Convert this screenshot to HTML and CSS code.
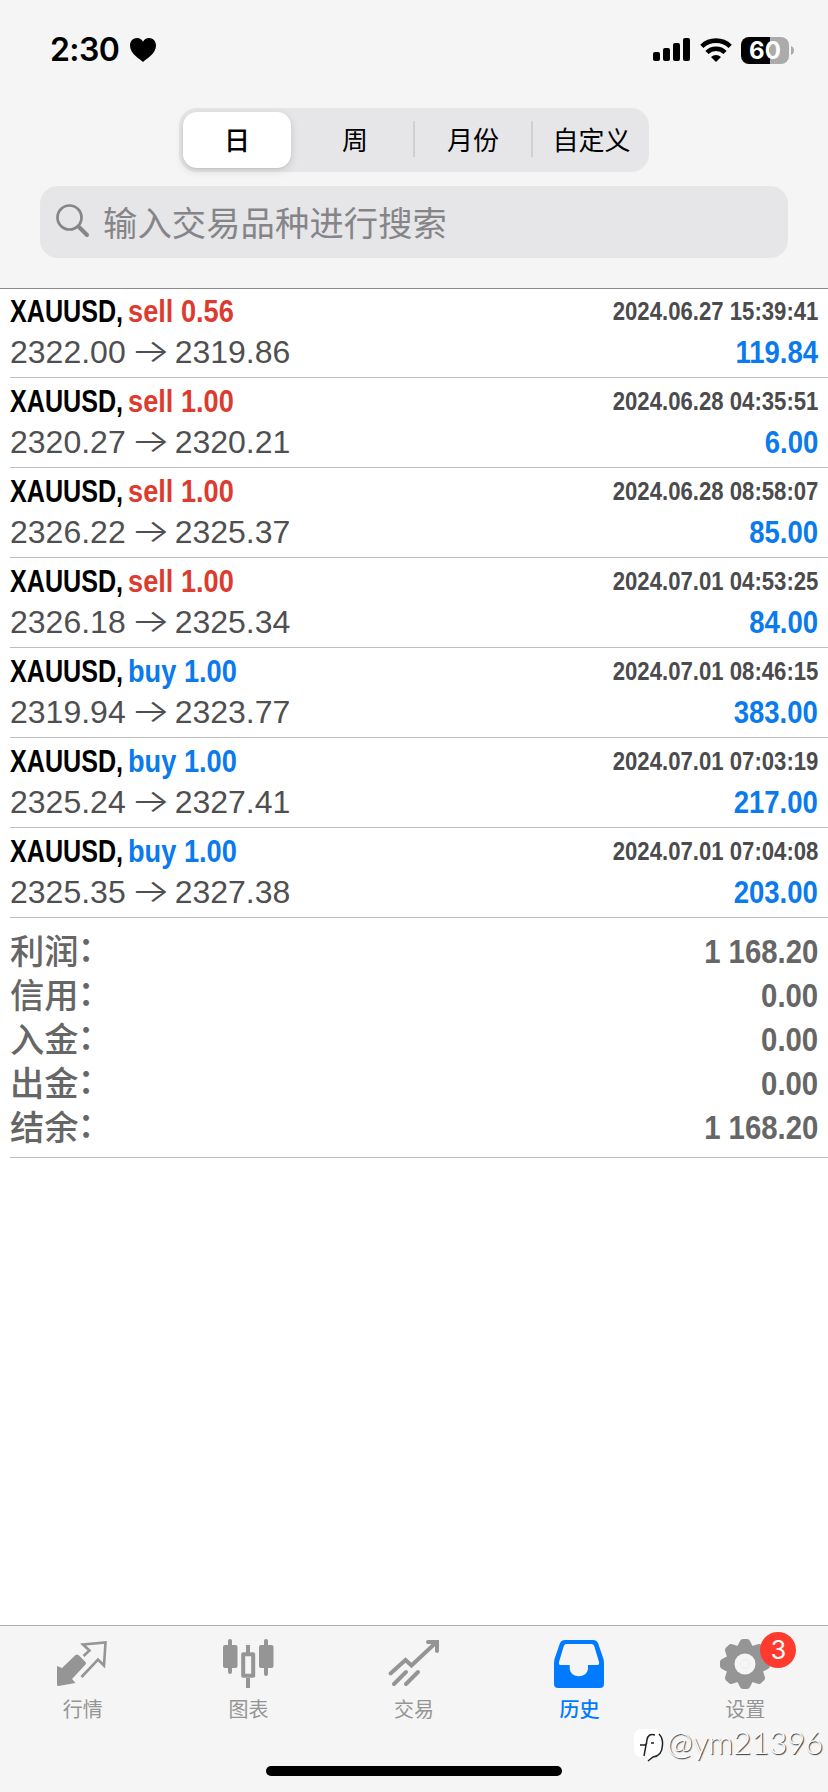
FILE: index.html
```html
<!DOCTYPE html>
<html lang="zh-CN">
<head>
<meta charset="utf-8">
<title>历史</title>
<link rel="stylesheet" href="styles.css">
</head>
<body>
<div class="app">
  <header class="header">
    <div class="status">
      <div class="clock"><span>2:30</span>
        <svg width="26" height="24" viewBox="0 0 26 24"><path d="M13 24C10 21 0 16 0 7.500C0 3 3 0 7 0C9.700 0 12 1.500 13 3.800C14 1.500 16.300 0 19 0C23 0 26 3 26 7.500C26 16 16 21 13 24Z"/></svg>
      </div>
      <div class="signals">
        <svg width="37" height="24" viewBox="0 0 37 24"><rect x="0" y="14" width="7" height="9" rx="2"/><rect x="10" y="10" width="7" height="13" rx="2"/><rect x="20" y="5" width="7" height="18" rx="2"/><rect x="30" y="0" width="7" height="23" rx="2"/></svg>
        <svg class="wifi" width="32" height="24" viewBox="0 0 32 24"><g fill="none" stroke="#000" stroke-width="4.600"><path d="M1.800 8.300A20.500 20.500 0 0 1 30.200 8.300"/><path d="M7 14.500A12.700 12.700 0 0 1 25 14.500"/></g><path d="M11 18.900A7.300 7.300 0 0 1 21 18.900L16 24Z"/></svg>
        <div class="battery"><span>60</span></div>
        <svg class="nub" width="3" height="9" viewBox="0 0 3 9"><path d="M0 0C4 1.500 4 7.500 0 9Z" fill="#ababab"/></svg>
      </div>
    </div>
    <nav class="segments">
      <span class="segment active">日</span><span class="segment second">周</span><span class="segment ruled">月份</span><span class="segment ruled last">自定义</span>
    </nav>
    <div class="search">
      <svg width="34" height="34" viewBox="0 0 34 34" fill="none" stroke="#858589"><circle cx="13.500" cy="13.500" r="12" stroke-width="2.700"/><path d="M22.500 22.500L31 31" stroke-width="4" stroke-linecap="round"/></svg>
      <span>输入交易品种进行搜索</span>
    </div>
  </header>
  <main class="history">
    <article class="deal">
      <div class="line"><div class="title"><span class="symbol">XAUUSD,</span><span class="side sell">sell 0.56</span></div><time class="time">2024.06.27 15:39:41</time></div>
      <div class="line"><div class="prices">2322.00<i>→</i>2319.86</div><div class="profit">119.84</div></div>
    </article>
    <article class="deal">
      <div class="line"><div class="title"><span class="symbol">XAUUSD,</span><span class="side sell">sell 1.00</span></div><time class="time">2024.06.28 04:35:51</time></div>
      <div class="line"><div class="prices">2320.27<i>→</i>2320.21</div><div class="profit">6.00</div></div>
    </article>
    <article class="deal">
      <div class="line"><div class="title"><span class="symbol">XAUUSD,</span><span class="side sell">sell 1.00</span></div><time class="time">2024.06.28 08:58:07</time></div>
      <div class="line"><div class="prices">2326.22<i>→</i>2325.37</div><div class="profit">85.00</div></div>
    </article>
    <article class="deal">
      <div class="line"><div class="title"><span class="symbol">XAUUSD,</span><span class="side sell">sell 1.00</span></div><time class="time">2024.07.01 04:53:25</time></div>
      <div class="line"><div class="prices">2326.18<i>→</i>2325.34</div><div class="profit">84.00</div></div>
    </article>
    <article class="deal">
      <div class="line"><div class="title"><span class="symbol">XAUUSD,</span><span class="side buy">buy 1.00</span></div><time class="time">2024.07.01 08:46:15</time></div>
      <div class="line"><div class="prices">2319.94<i>→</i>2323.77</div><div class="profit">383.00</div></div>
    </article>
    <article class="deal">
      <div class="line"><div class="title"><span class="symbol">XAUUSD,</span><span class="side buy">buy 1.00</span></div><time class="time">2024.07.01 07:03:19</time></div>
      <div class="line"><div class="prices">2325.24<i>→</i>2327.41</div><div class="profit">217.00</div></div>
    </article>
    <article class="deal">
      <div class="line"><div class="title"><span class="symbol">XAUUSD,</span><span class="side buy">buy 1.00</span></div><time class="time">2024.07.01 07:04:08</time></div>
      <div class="line"><div class="prices">2325.35<i>→</i>2327.38</div><div class="profit">203.00</div></div>
    </article>
    <section class="summary">
      <div class="total"><span class="label">利润<b>：</b></span><span class="amount">1 168.20</span></div>
      <div class="total"><span class="label">信用<b>：</b></span><span class="amount">0.00</span></div>
      <div class="total"><span class="label">入金<b>：</b></span><span class="amount">0.00</span></div>
      <div class="total"><span class="label">出金<b>：</b></span><span class="amount">0.00</span></div>
      <div class="total"><span class="label">结余<b>：</b></span><span class="amount">1 168.20</span></div>
    </section>
  </main>
  <footer class="tabbar">
    <div class="tabs">
      <div class="tab">
        <svg width="54" height="54" viewBox="1 0 54 54"><path fill="#959595" d="M2 30L7 32L20.500 19Q22 18 23.500 19L30.500 26Q31.500 27.500 30.500 28.500L17 43L20.500 47L3.500 50Q2 50 2 48.500Z"/><path fill="none" stroke="#959595" stroke-width="2.600" d="M28.500 20L34.500 14.500L28 8.500L50.500 6.500L49 29.500L43 23.500L26.500 41"/></svg>
        <span>行情</span>
      </div>
      <div class="tab">
        <svg width="54" height="54" viewBox="0 0 54 54"><g fill="#959595"><rect x="2" y="9" width="14.500" height="23" rx="2"/><rect x="7" y="3" width="4" height="35" rx="2"/><rect x="38" y="9" width="14.500" height="23" rx="2"/><rect x="43" y="3" width="4" height="37" rx="2"/><rect x="25" y="9" width="4" height="9"/><rect x="25" y="42" width="4" height="10"/></g><rect x="22.200" y="18.200" width="10" height="21.500" fill="none" stroke="#959595" stroke-width="4" stroke-linejoin="round"/></svg>
        <span>图表</span>
      </div>
      <div class="tab">
        <svg width="54" height="54" viewBox="0 0 54 54" fill="none" stroke="#959595" stroke-width="4" stroke-linecap="round" stroke-linejoin="miter"><path d="M3.500 37.500L18.500 24L24.500 29.500L49 6.500M41 6H50V15M7 48L19 36M19 48L31 36"/></svg>
        <span>交易</span>
      </div>
      <div class="tab current">
        <svg width="54" height="54" viewBox="1 0 54 54"><path fill="#007aff" fill-rule="evenodd" d="M13 4H41Q44.500 4 46 7L51.500 23Q52 25 52 28V48Q52 52 48 52H6Q2 52 2 48V28Q2 25 2.500 23L8 7Q9.500 4 13 4ZM14.500 8Q12.500 8 11.800 10L7 26Q6.500 29 8.500 29H17.700V32C17.700 43 36 43 36 32V29H45.500Q47.500 29 47 26L42.200 10Q41.500 8 39.500 8Z"/></svg>
        <span>历史</span>
      </div>
      <div class="tab">
        <svg width="54" height="54" viewBox="-27 -28 54 54"><g fill="#959595"><circle r="19.500"/><g id="teeth"><path id="tooth" d="M-8 -17L-5 -23Q-4 -25 -2 -25H2Q4 -25 5 -23L8 -17Z"/><use href="#tooth" transform="rotate(45)"/><use href="#tooth" transform="rotate(90)"/><use href="#tooth" transform="rotate(135)"/></g><use href="#teeth" transform="rotate(180)"/></g><circle r="10.500" fill="#f5f5f5"/><circle r="4.500" fill="none" stroke="#ececec"/></svg>
        <span>设置</span>
        <em class="badge">3</em>
      </div>
    </div>
    <div class="home"></div>
    <div class="watermark">
      <svg width="30" height="34" viewBox="0 0 30 34"><path fill="#fff" d="M8 0H20Q28 0 28 8V20Q28 26 20 28L14 31V28H8Q0 28 0 20V8Q0 0 8 0Z"/><path fill="none" stroke="#222" stroke-width="1.500" d="M21 6Q14 4 13 11L10 27M6 16H11L13 14M17 14H20M25 5Q29 9 28.500 16Q28 27 19 28L14 32"/></svg>
      <span>@ym21396</span>
    </div>
  </footer>
</div>
</body>
</html>
```
FILE: styles.css
```css
* { box-sizing: border-box; }
body { margin: 0; background: #fff; font-family: "Liberation Sans", "Noto Sans CJK SC", sans-serif; }
.app { width: 828px; height: 1792px; display: flex; flex-direction: column; overflow: hidden; }
.header { height: 289px; flex: none; background: #f5f5f5; border-bottom: 1px solid #8a8a8c; display: flex; flex-direction: column; align-items: center; }
.status { width: 100%; height: 108px; padding: 36px 34px 0 50px; display: flex; justify-content: space-between; align-items: flex-start; }
.clock { display: flex; align-items: center; gap: 11px; font: 600 32px/28px Inter, sans-serif; letter-spacing: -.600px; }
.signals { display: flex; align-items: center; height: 28px; }
.wifi { margin: 0 9px 0 10px; }
.battery { width: 48px; height: 27px; border-radius: 8px; background: linear-gradient(90deg, #000 60%, #ababab 60%); color: #fff; font: 700 24px/27px Inter, sans-serif; text-align: center; }
.nub { margin-left: 2px; }
.segments { width: 470px; height: 64px; padding: 4px; border-radius: 18px; background: #e6e6e8; display: grid; grid-template-columns: 108px 122px 118px 1fr; }
.segment { font: 400 26px/54px "Noto Sans CJK SC", sans-serif; text-align: center; }
.segment.active { background: #fff; border-radius: 14px; font-weight: 500; box-shadow: 0 3px 10px rgba(0,0,0,.12), 0 1px 2px rgba(0,0,0,.08); }
.segment.second { padding-left: 6px; }
.segment.ruled { border-left: 2px solid #d0d0d3; border-image: linear-gradient(transparent 18%, #d0d0d3 18%, #d0d0d3 80%, transparent 80%) 1; }
.segment.last { padding-left: 5px; }
.search { margin-top: 14px; width: 748px; height: 72px; border-radius: 18px; background: #e6e6e8; display: flex; align-items: center; gap: 13px; padding: 0 0 2px 16px; color: #858589; font: 400 34.300px/70px "Noto Sans CJK SC", sans-serif; letter-spacing: .100px; }
.history { flex: 1; }
.deal { height: 90px; margin-left: 10px; padding: 3px 10px 0 0; border-bottom: 1px solid #bebec2; }
.deal:first-child { height: 89px; padding-top: 2px; }
.line { display: flex; justify-content: space-between; height: 41px; line-height: 41px; }
.title { display: flex; font-weight: 700; font-size: 32px; color: #000; white-space: nowrap; }
.symbol { width: 118px; transform: scaleX(.785); transform-origin: left; }
.symbol, .side { flex: none; display: block; }
.symbol { width: max-content; margin-right: -26px; }
.side { transform: scaleX(.85); transform-origin: left; }
.sell { color: #dc3c2f; }
.buy { color: #0a7aec; }
.time { color: #4b4b4d; font-weight: 700; font-size: 26px; transform: scaleX(.852); transform-origin: right; }
.prices { color: #4f4f51; font-size: 32px; display: flex; }
.prices i { font: 300 32px/37px Inter, sans-serif; width: 49px; text-align: center; transform: scaleX(1.3); }
.profit { color: #0a7aec; font-weight: 700; font-size: 32px; transform: scaleX(.86); transform-origin: right; }
.summary { height: 240px; margin-left: 10px; padding: 11px 10px 0 0; border-bottom: 1px solid #bebec2; }
.total { display: flex; justify-content: space-between; height: 44px; color: #666; }
.label { display: flex; font: 500 34.300px/46px "Liberation Sans", "Noto Sans CJK SC", sans-serif; }
.label b { font-weight: 500; transform: translate(-1px, -3px); }
.amount { font: 700 34px/44px "Liberation Sans", sans-serif; transform: scaleX(.863); transform-origin: right; }
.tabbar { position: relative; height: 167px; flex: none; background: #f5f5f5; border-top: 1px solid #acacae; display: flex; flex-direction: column; align-items: center; justify-content: space-between; padding-bottom: 16px; }
.tabs { width: 100%; display: grid; grid-template-columns: repeat(5, 1fr); padding-top: 10px; }
.tab { position: relative; display: flex; flex-direction: column; align-items: center; color: #959595; font: 400 20px/38px "Noto Sans CJK SC", sans-serif; }
.tab svg { display: block; }
.current { color: #007aff; font-weight: 500; }
.badge { position: absolute; left: 98px; top: -4px; width: 36px; height: 36px; border-radius: 50%; background: #ff3b30; color: #fff; font: 400 25px/36px Inter, sans-serif; text-align: center; }
.home { width: 296px; height: 10px; border-radius: 5px; background: #000; }
.watermark { position: absolute; left: 634px; top: 103px; display: flex; align-items: flex-start; gap: 3px; color: #fff; font: 300 31px/26px Lato, sans-serif; text-shadow: 1px 1px 1px #333; }
```
